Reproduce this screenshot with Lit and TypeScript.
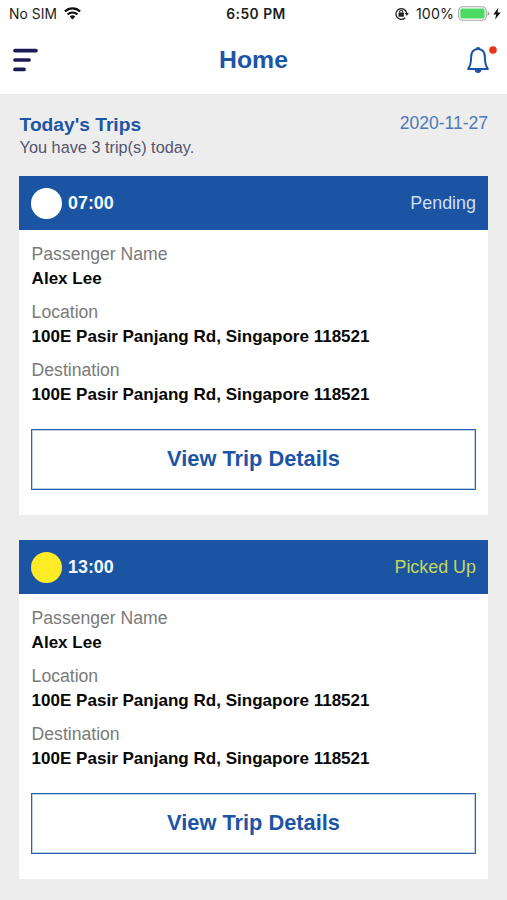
import { LitElement, html, css } from "lit";
import { customElement, property } from "lit/decorators.js";

interface Trip {
  time: string;
  status: string;
  tone: "pending" | "picked";
  passenger: string;
  location: string;
  destination: string;
}

const TRIPS: Trip[] = [
  {
    time: "07:00",
    status: "Pending",
    tone: "pending",
    passenger: "Alex Lee",
    location: "100E Pasir Panjang Rd, Singapore 118521",
    destination: "100E Pasir Panjang Rd, Singapore 118521",
  },
  {
    time: "13:00",
    status: "Picked Up",
    tone: "picked",
    passenger: "Alex Lee",
    location: "100E Pasir Panjang Rd, Singapore 118521",
    destination: "100E Pasir Panjang Rd, Singapore 118521",
  },
];

@customElement("status-bar")
class StatusBar extends LitElement {
  static styles = css`
    :host {
      display: grid;
      grid-template-columns: 1fr auto 1fr;
      align-items: center;
      height: 28px;
      padding: 0 6px 0 9px;
      box-sizing: border-box;
      font: 400 14px/28px Inter, "Liberation Sans", sans-serif;
      color: #1c1c1c;
    }
    .side { display: flex; align-items: center; }
    .end { justify-content: flex-end; }
    .carrier { font-size: 13.8px; letter-spacing: 0.1px; }
    .wifi { margin-left: 7px; margin-top: -2px; }
    .clock { margin-left: 2px; font-weight: 600; font-size: 13.8px; letter-spacing: 0.5px; }
    .lock { margin-right: 7px; margin-top: -2px; }
    .percent { font-size: 14.2px; letter-spacing: 0.1px; }
    .battery { margin-left: 4px; margin-top: -2px; }
    .bolt { margin-left: 3px; margin-top: -2px; }
    svg { display: block; flex: none; }
  `;

  render() {
    return html`
      <div class="side">
        <span class="carrier">No SIM</span>
        <svg class="wifi" width="17" height="13" viewBox="0 0 17 13" fill="none" stroke="#0c0c0c">
          <path d="M0.9 4.5a11 11 0 0 1 15.2 0" stroke-width="2.2" />
          <path d="M3.6 7.5a7.1 7.1 0 0 1 9.8 0" stroke-width="2.1" />
          <path d="M8.5 12.4L5.7 9.6a4.1 4.1 0 0 1 5.6 0z" fill="#0c0c0c" stroke="none" />
        </svg>
      </div>
      <span class="clock">6:50 PM</span>
      <div class="side end">
        <svg class="lock" width="14" height="13" viewBox="0 0 14 13" fill="none" stroke="#222">
          <path d="M10.2 10.8a5.4 5.4 0 1 1 1.5-4.6" stroke-width="1.3" />
          <path d="M9.8 6.1h4l-2 2.8z" fill="#222" stroke="none" />
          <rect x="3.5" y="5.5" width="5.4" height="4.2" rx="0.6" fill="#222" stroke="none" />
          <path d="M4.7 5.8V4.7a1.5 1.5 0 0 1 3 0v1.1" stroke-width="1.1" />
        </svg>
        <span class="percent">100%</span>
        <svg class="battery" width="32" height="15" viewBox="0 0 32 15">
          <rect x="0.7" y="0.8" width="27.6" height="13.4" rx="4" fill="#fff" stroke="#a3a3a3" stroke-width="1.1" />
          <rect x="2.4" y="2.6" width="24.2" height="9.8" rx="1.6" fill="#4cd964" />
          <path d="M29.6 5.2q1.9 0.5 1.9 2.3t-1.9 2.3z" fill="#a3a3a3" />
        </svg>
        <svg class="bolt" width="8" height="13" viewBox="0 0 8 13">
          <path d="M5.5 0.6L0.3 7.4h2.9L2.1 12.4l5.6-7H4.5z" fill="#111" />
        </svg>
      </div>
    `;
  }
}

@customElement("nav-header")
class NavHeader extends LitElement {
  static styles = css`
    :host {
      display: grid;
      grid-template-columns: 1fr auto 1fr;
      align-items: center;
      height: 67px;
      padding: 0 10px 0 13px;
      box-sizing: border-box;
      border-bottom: 1px solid #e6e6e6;
    }
    .title {
      margin: -2px 3px 0 0;
      font: 700 24.8px/30px "Liberation Sans", sans-serif;
      color: #1d55a6;
    }
    .icon { display: block; }
    .menu { margin-top: -2px; }
    .bell { justify-self: end; margin-top: -3px; }
  `;

  render() {
    return html`
      <svg class="icon menu" width="26" height="24" viewBox="0 0 26 24" stroke="#1c1a52" stroke-width="3.7" stroke-linecap="round">
        <path d="M2 2.6H23M2 12H16M2 21.4H11" />
      </svg>
      <h1 class="title">Home</h1>
      <svg class="icon bell" width="31" height="30" viewBox="0 0 31 30">
        <path
          d="M11.2 3.9C7 4.5 5.1 7.7 5.1 12.2C5.1 18.5 4.3 21 2.1 24H21.9C19.7 21 18.9 18.5 18.9 12.2C18.9 7.7 17 4.5 12.8 3.9Z"
          fill="none" stroke="#1d55a6" stroke-width="2" stroke-linejoin="round"
        />
        <path d="M9.6 4.2a2.4 2.3 0 0 1 4.8 0z" fill="#1d55a6" />
        <path d="M8.6 24.6h6.8a3.4 3.4 0 0 1-6.8 0z" fill="#1d55a6" />
        <circle cx="27" cy="5" r="3.8" fill="#e8341c" />
      </svg>
    `;
  }
}

@customElement("trip-card")
class TripCard extends LitElement {
  @property({ attribute: false }) trip!: Trip;

  static styles = css`
    :host {
      display: block;
      height: 339px;
      background: #fff;
      font-family: "Liberation Sans", sans-serif;
    }
    .head {
      display: flex;
      align-items: center;
      height: 54px;
      padding: 0 12px;
      background: #1b54a3;
    }
    .dot { width: 31px; height: 31px; border-radius: 50%; background: #fff; }
    .picked .dot { background: #ffec27; }
    .time { margin-left: 6px; font: 700 17.9px/24px "Liberation Sans", sans-serif; color: #f4f8fd; }
    .status { margin-left: auto; font-size: 17.9px; line-height: 24px; color: #cfdff2; }
    .picked .status { color: #c3d857; }
    .body { padding: 12px 12px 0; }
    .fields { display: grid; gap: 10px; margin: 0; padding-left: 0.6px; }
    .label { font-size: 17.6px; line-height: 25px; color: #7a7a7a; }
    .value { margin: 0; font-size: 17.05px; line-height: 23px; font-weight: 700; color: #080808; }
    .action {
      display: block;
      width: 100%;
      height: 61px;
      margin-top: 23px;
      padding: 0 0 2px;
      border: 1px solid #2a60ad;
      border-radius: 0;
      background: #fff;
      box-shadow: inset 0 0 0 1px #bccde6;
      font: 700 21.8px/28px "Liberation Sans", sans-serif;
      color: #1d55a6;
    }
  `;

  render() {
    const t = this.trip;
    const rows = [
      ["Passenger Name", t.passenger],
      ["Location", t.location],
      ["Destination", t.destination],
    ];
    return html`
      <div class="head ${t.tone}">
        <span class="dot"></span>
        <span class="time">${t.time}</span>
        <span class="status">${t.status}</span>
      </div>
      <div class="body">
        <dl class="fields">
          ${rows.map(([k, v]) => html`<div><dt class="label">${k}</dt><dd class="value">${v}</dd></div>`)}
        </dl>
        <button class="action">View Trip Details</button>
      </div>
    `;
  }
}

@customElement("app-root")
class AppRoot extends LitElement {
  static styles = css`
    :host {
      display: flex;
      flex-direction: column;
      height: 900px;
      overflow: hidden;
      background: #ededed;
      font-family: "Liberation Sans", sans-serif;
    }
    .top { background: #fff; }
    .content { padding: 19px 19px 0; }
    .intro { display: flex; justify-content: space-between; height: 62px; }
    .heading { margin: 0; padding-left: 0.6px; font-size: 19.2px; line-height: 22px; color: #1d55a6; }
    .summary { margin: 0; padding-left: 0.6px; font-size: 16.3px; line-height: 22px; color: #55556d; }
    .date { font-size: 17.5px; line-height: 19px; color: #4c78b5; }
    .trips { display: grid; gap: 25px; }
  `;

  render() {
    return html`
      <div class="top">
        <status-bar></status-bar>
        <nav-header></nav-header>
      </div>
      <main class="content">
        <section class="intro">
          <div>
            <h2 class="heading">Today's Trips</h2>
            <p class="summary">You have 3 trip(s) today.</p>
          </div>
          <span class="date">2020-11-27</span>
        </section>
        <section class="trips">
          ${TRIPS.map((t) => html`<trip-card .trip=${t}></trip-card>`)}
        </section>
      </main>
    `;
  }
}
